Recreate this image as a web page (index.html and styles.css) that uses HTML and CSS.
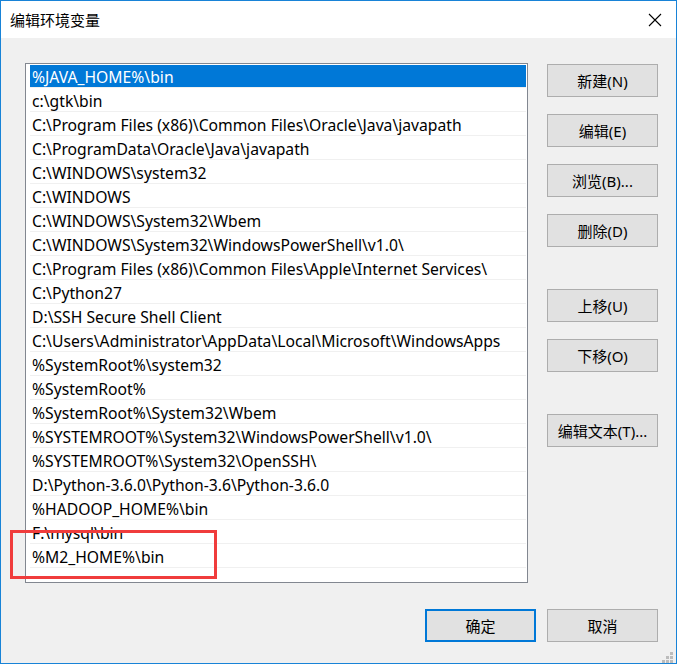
FILE: index.html
```html
<!DOCTYPE html>
<html lang="zh-CN">
<head>
<meta charset="utf-8">
<title>编辑环境变量</title>
<link rel="stylesheet" href="styles.css">
</head>
<body>
<div class="window">
  <div class="titlebar">
    <span class="title">编辑环境变量</span>
    <span class="close">
      <svg width="14" height="14" viewBox="0 0 14 14"><path d="M1 1L13 13M13 1L1 13" stroke="#000" stroke-width="1.1" fill="none"/></svg>
    </span>
  </div>
  <div class="body">
    <div class="main">
      <div class="listbox">
        <div class="row selected">%JAVA_HOME%\bin</div>
        <div class="row">c:\gtk\bin</div>
        <div class="row">C:\Program Files (x86)\Common Files\Oracle\Java\javapath</div>
        <div class="row">C:\ProgramData\Oracle\Java\javapath</div>
        <div class="row">C:\WINDOWS\system32</div>
        <div class="row">C:\WINDOWS</div>
        <div class="row">C:\WINDOWS\System32\Wbem</div>
        <div class="row">C:\WINDOWS\System32\WindowsPowerShell\v1.0\</div>
        <div class="row">C:\Program Files (x86)\Common Files\Apple\Internet Services\</div>
        <div class="row">C:\Python27</div>
        <div class="row">D:\SSH Secure Shell Client</div>
        <div class="row">C:\Users\Administrator\AppData\Local\Microsoft\WindowsApps</div>
        <div class="row">%SystemRoot%\system32</div>
        <div class="row">%SystemRoot%</div>
        <div class="row">%SystemRoot%\System32\Wbem</div>
        <div class="row">%SYSTEMROOT%\System32\WindowsPowerShell\v1.0\</div>
        <div class="row">%SYSTEMROOT%\System32\OpenSSH\</div>
        <div class="row">D:\Python-3.6.0\Python-3.6\Python-3.6.0</div>
        <div class="row">%HADOOP_HOME%\bin</div>
        <div class="row">F:\mysql\bin</div>
        <div class="row">%M2_HOME%\bin</div>
      </div>
      <div class="side">
        <div class="group">
          <button class="btn">新建(N)</button>
          <button class="btn">编辑(E)</button>
          <button class="btn">浏览(B)...</button>
          <button class="btn">删除(D)</button>
        </div>
        <div class="group">
          <button class="btn">上移(U)</button>
          <button class="btn">下移(O)</button>
        </div>
        <div class="group">
          <button class="btn">编辑文本(T)...</button>
        </div>
      </div>
    </div>
    <div class="footer">
      <button class="btn default">确定</button>
      <button class="btn">取消</button>
    </div>
  </div>
  <div class="grip">
    <i class="d1"></i><i class="d2"></i><i class="d3"></i><i class="d4"></i><i class="d5"></i><i class="d6"></i>
  </div>
  <div class="highlight"></div>
</div>
</body>
</html>
```

FILE: styles.css
```css
html, body {
  margin: 0;
  padding: 0;
  background: #f0f0f0;
}
body {
  font-family: "Noto Sans", "Noto Sans CJK SC", sans-serif;
  font-size: 15px;
  color: #000;
}
.window {
  position: relative;
  box-sizing: border-box;
  width: 677px;
  height: 664px;
  border: 1px solid #1883d7;
  background: #f0f0f0;
  display: flex;
  flex-direction: column;
}
.titlebar {
  height: 37px;
  background: #fff;
  display: flex;
  align-items: center;
  justify-content: space-between;
  padding: 0 14px 0 9px;
}
.title {
  font-family: "Noto Sans CJK SC", sans-serif;
  font-size: 15px;
  margin-top: -1px;
}
.close {
  display: flex;
  width: 14px;
  height: 14px;
}
.body {
  flex: 1;
  padding: 25px 18px 0 24px;
  display: flex;
  flex-direction: column;
}
.main {
  display: flex;
  gap: 19px;
}
.listbox {
  box-sizing: border-box;
  width: 503px;
  height: 520px;
  border: 1px solid #828790;
  background: #fff;
  padding: 0 1px 0 0;
}
.row {
  height: 21px;
  line-height: 23px;
  padding-top: 2px;
  border-bottom: 1px solid #f0f0f0;
  padding-left: 2px;
  margin-left: 4px;
  white-space: nowrap;
  overflow: hidden;
  font-family: "Noto Sans", "Noto Sans CJK SC", sans-serif;
  font-size: 15.7px;
}
.row.selected {
  background: #0078d7;
  color: #fff;
  box-shadow: inset 0 1px 0 #fff;
}
.side {
  display: flex;
  flex-direction: column;
  gap: 42px;
  padding-top: 1px;
}
.group {
  display: flex;
  flex-direction: column;
  gap: 17px;
}
.btn {
  box-sizing: border-box;
  width: 111px;
  height: 33px;
  border: 1px solid #adadad;
  background: #e1e1e1;
  font-family: "Noto Sans", "Noto Sans CJK SC", sans-serif;
  font-size: 15px;
  color: #000;
  padding: 0 0 1px 0;
  margin: 0;
}
.btn.default {
  border: 2px solid #0078d7;
}
.footer {
  display: flex;
  justify-content: flex-end;
  gap: 11px;
  margin-top: 26px;
}
.grip {
  position: absolute;
  right: 3px;
  bottom: 0px;
  width: 11px;
  height: 11px;
}
.grip i {
  position: absolute;
  width: 3px;
  height: 3px;
  background: #bcbcbc;
}
.grip .d1 { right: 0; top: 0; }
.grip .d2 { right: 0; top: 4px; }
.grip .d3 { right: 4px; top: 4px; }
.grip .d4 { right: 0; top: 8px; }
.grip .d5 { right: 4px; top: 8px; }
.grip .d6 { right: 8px; top: 8px; }
.highlight {
  position: absolute;
  left: 9px;
  top: 529px;
  width: 201px;
  height: 43px;
  border: 3px solid #f03c3c;
}
```
